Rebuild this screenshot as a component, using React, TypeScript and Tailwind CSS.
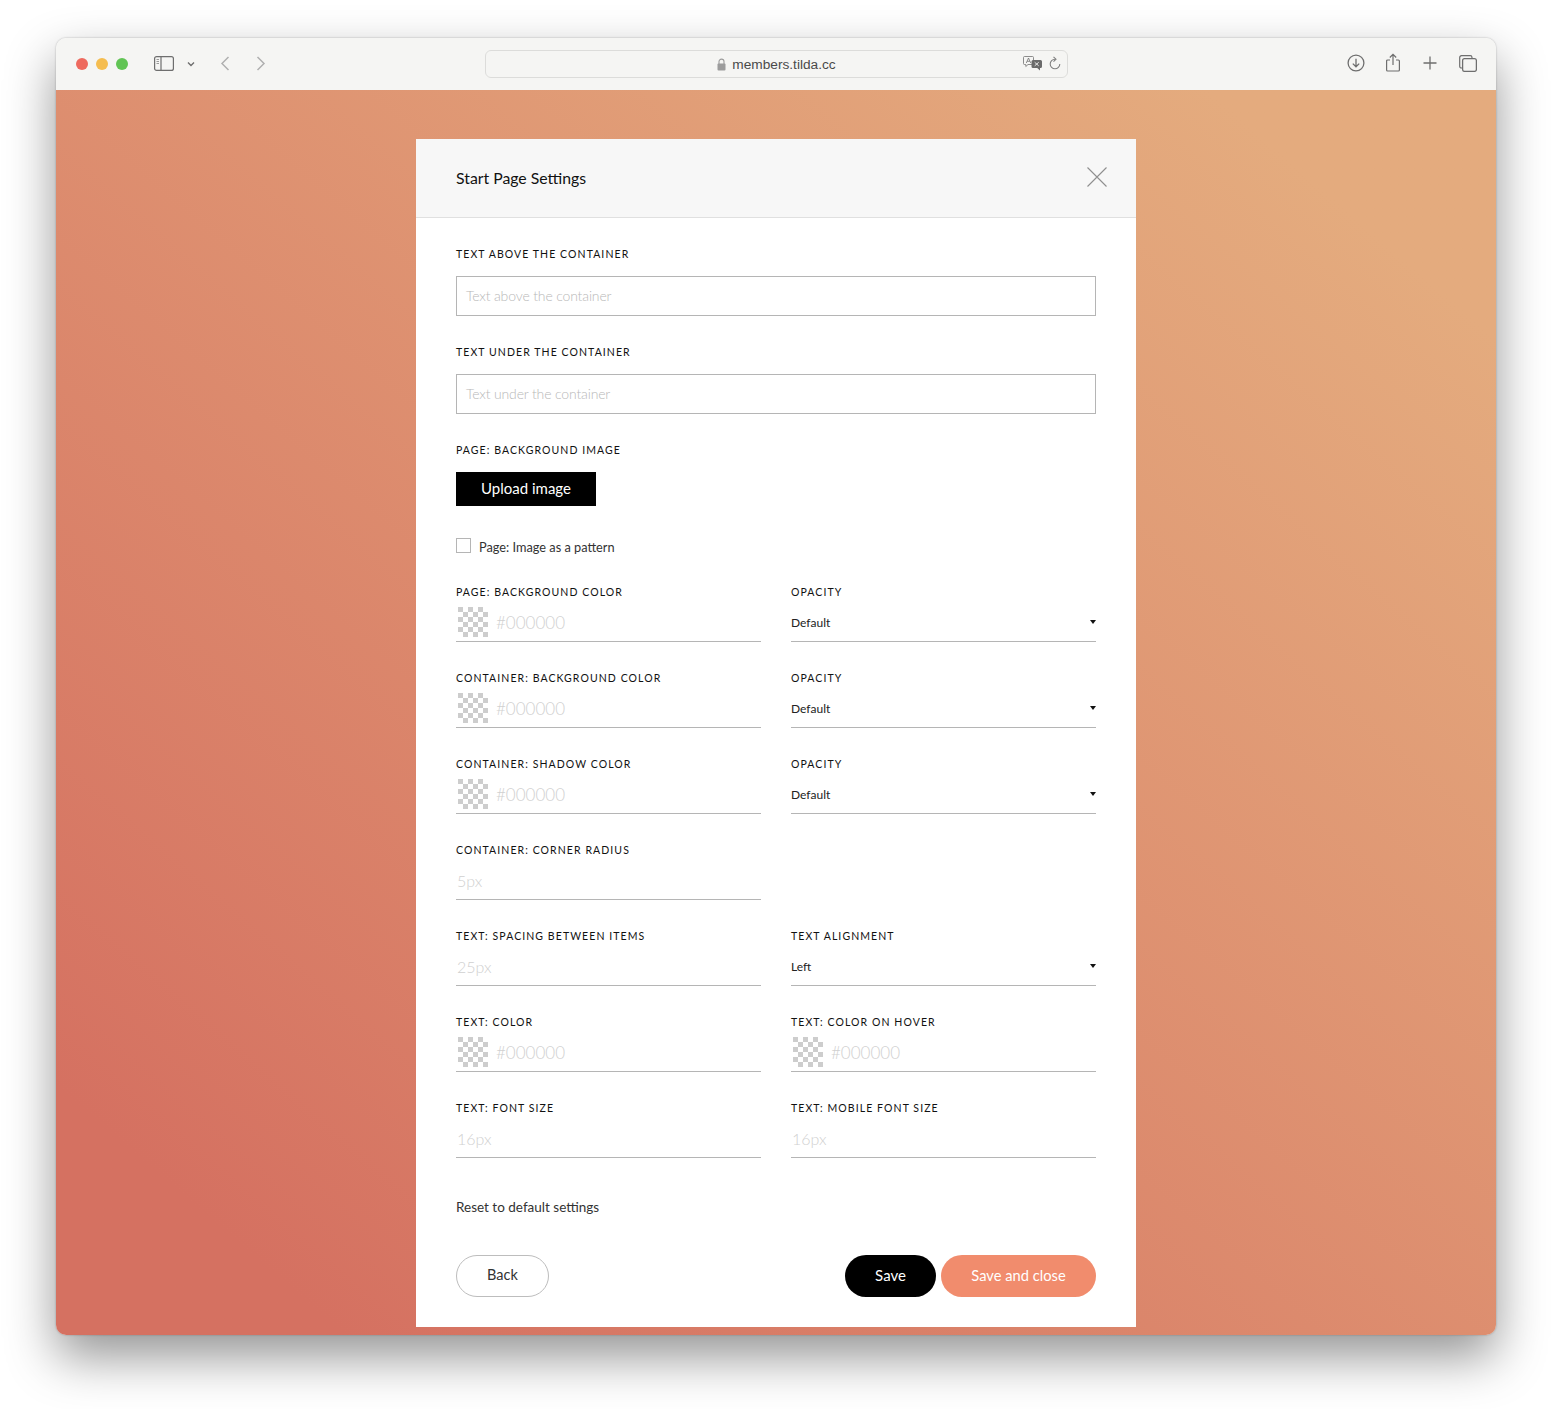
import { ReactNode } from "react";

const font = "font-['Lato','Liberation_Sans',sans-serif]";

function Label({ children }: { children: ReactNode }) {
  return (
    <div className="h-4 text-[10.5px] leading-4 tracking-[1.08px] uppercase text-[#111] whitespace-nowrap">
      {children}
    </div>
  );
}

function Swatch() {
  return (
    <svg width="30" height="30" viewBox="0 0 30 30" className="shrink-0">
      <defs>
        <pattern id="chk" width="10" height="10" patternUnits="userSpaceOnUse">
          <rect width="10" height="10" fill="#ffffff" />
          <rect width="5" height="5" fill="#cdcdcd" />
          <rect x="5" y="5" width="5" height="5" fill="#cdcdcd" />
        </pattern>
      </defs>
      <rect width="30" height="30" fill="url(#chk)" />
    </svg>
  );
}

function ColorField({ label }: { label: string }) {
  return (
    <div>
      <Label>{label}</Label>
      <div className="h-[42px] border-b border-[#b5b5b5] flex items-start pt-[7px] pl-[2px]">
        <Swatch />
        <span className="ml-[8px] mt-[4px] text-[17px] leading-[24px] font-light text-[#d0d0d0]">#000000</span>
      </div>
    </div>
  );
}

function TextField({ label, value }: { label: string; value: string }) {
  return (
    <div>
      <Label>{label}</Label>
      <div className="h-[42px] border-b border-[#b5b5b5] pt-[11px] pl-[1px] text-[16px] leading-[24px] font-light text-[#d0d0d0]">
        {value}
      </div>
    </div>
  );
}

function SelectField({ label, value }: { label: string; value: string }) {
  return (
    <div>
      <Label>{label}</Label>
      <div className="h-[42px] border-b border-[#b5b5b5] flex items-center justify-between text-[12px] text-[#222]">
        <span className="mt-[4px]">{value}</span>
        <svg width="6" height="4" viewBox="0 0 6 4" className="mt-[3px]">
          <path d="M0 0h6L3 4z" fill="#111" />
        </svg>
      </div>
    </div>
  );
}

function BoxInput({ label, placeholder }: { label: string; placeholder: string }) {
  return (
    <div>
      <Label>{label}</Label>
      <div className="mt-[14px] h-10 border border-[#b5b5b5] px-[9px] pb-[2px] flex items-center text-[14px] tracking-[-0.15px] font-light text-[#b8b8b8]">
        {placeholder}
      </div>
    </div>
  );
}

function Toolbar() {
  const ic = "#6e6e6e";
  return (
    <div className="h-[52px] bg-[#f5f5f3] flex items-center relative">
      <div className="flex items-center gap-2 ml-[20px] mb-[1px]">
        <span className="w-3 h-3 rounded-full bg-[#ee6a5e]" />
        <span className="w-3 h-3 rounded-full bg-[#f5bd4f]" />
        <span className="w-3 h-3 rounded-full bg-[#61c454]" />
      </div>
      <div className="flex items-center mb-[2px]">
        <svg width="20" height="15" viewBox="0 0 20 15" fill="none" className="ml-[26px]">
          <rect x="0.6" y="0.6" width="18.8" height="13.8" rx="2" stroke={ic} strokeWidth="1.2" />
          <path d="M7 1v13" stroke={ic} strokeWidth="1.2" />
          <path d="M2.5 3.5h2.5M2.5 5.5h2.5M2.5 7.5h2.5" stroke="#9a9a9a" strokeWidth="1.1" />
        </svg>
        <svg width="8" height="6" viewBox="0 0 8 6" fill="none" className="ml-[13px] mt-[1px]">
          <path d="M1 1.5l3 3 3-3" stroke={ic} strokeWidth="1.4" />
        </svg>
        <svg width="10" height="15" viewBox="0 0 10 15" fill="none" className="ml-[25px]">
          <path d="M8.5 1L2 7.5 8.5 14" stroke="#b0b0b0" strokeWidth="1.5" />
        </svg>
        <svg width="10" height="15" viewBox="0 0 10 15" fill="none" className="ml-[26px]">
          <path d="M1.5 1L8 7.5 1.5 14" stroke="#b0b0b0" strokeWidth="1.5" />
        </svg>
      </div>

      <div className="ml-[219px] w-[583px] h-[28px] rounded-[6px] border border-[#dcdcda] flex items-center relative">
        <div className="flex-1 flex items-center justify-center mt-[2px] font-['Liberation_Sans',sans-serif] text-[13.7px] text-[#4a4a4a]">
          <svg width="9" height="13" viewBox="0 0 9 13" className="mr-[6px]" fill="none">
            <path d="M2 6V3.6a2.5 2.5 0 0 1 5 0V6" stroke="#9c9c9c" strokeWidth="1.1" />
            <rect x="0.5" y="5.5" width="8" height="7" rx="1" fill="#9c9c9c" />
          </svg>
          members.tilda.cc
        </div>
        <svg width="20" height="15" viewBox="0 0 20 15" fill="none" className="absolute left-[537px] top-[5px]">
          <path d="M1.5 0.5h8a1 1 0 0 1 1 1v6a1 1 0 0 1-1 1H5L2.800 10.500V8.500H1.500a1 1 0 0 1-1-1v-6a1 1 0 0 1 1-1z" fill="#f5f5f3" stroke="#808080" strokeWidth="0.9" />
          <path d="M3.300 7l2.200-5 2.200 5M4.200 5.300h2.600" stroke="#707070" strokeWidth="0.8" />
          <path d="M10 4h7.500A1.500 1.500 0 0 1 19 5.500v5a1.500 1.500 0 0 1-1.500 1.500H17v2.500L14.200 12H10a1.500 1.500 0 0 1-1.500-1.500v-5A1.500 1.500 0 0 1 10 4z" fill="#6a6a6a" />
          <path d="M11.700 6.300l4 3.500M15.700 6.300l-4 3.500" stroke="#f5f5f3" strokeWidth="0.9" />
        </svg>
        <svg width="12" height="15" viewBox="0 0 12 15" fill="none" className="absolute left-[563px] top-[5px]">
          <path d="M6 3.200A4.800 4.800 0 1 0 10.800 8" stroke="#808080" strokeWidth="1.100" />
          <path d="M4.500 0.800L7 3.200 4.500 5.600" stroke="#808080" strokeWidth="1.100" />
        </svg>
      </div>

      <div className="ml-auto flex items-center mr-[19px] mb-[2px]">
        <svg width="18" height="18" viewBox="0 0 18 18" fill="none" className="mr-[21px]">
          <circle cx="9" cy="9" r="7.900" stroke={ic} strokeWidth="1.300" />
          <path d="M9 4.800v8M5.800 9.600L9 12.800l3.200-3.200" stroke={ic} strokeWidth="1.300" />
        </svg>
        <svg width="14" height="19" viewBox="0 0 14 19" fill="none" className="mr-[23px] mb-[2px]">
          <path d="M4 7H1.600a1 1 0 0 0-1 1v9a1 1 0 0 0 1 1h10.800a1 1 0 0 0 1-1V8a1 1 0 0 0-1-1H10" stroke={ic} strokeWidth="1.200" />
          <path d="M7 12V1.500M3.800 4.500L7 1.300l3.200 3.200" stroke={ic} strokeWidth="1.200" />
        </svg>
        <svg width="14" height="14" viewBox="0 0 14 14" fill="none" className="mr-[22px]">
          <path d="M7 0.500v13M0.500 7h13" stroke={ic} strokeWidth="1.300" />
        </svg>
        <svg width="18" height="17" viewBox="0 0 18 17" fill="none">
          <path d="M3 13H2.500A1.800 1.800 0 0 1 .700 11.200V2.500A1.800 1.800 0 0 1 2.500.700h8.700A1.800 1.800 0 0 1 13 2.500V3" stroke={ic} strokeWidth="1.200" />
          <rect x="3.600" y="3.600" width="13.800" height="12.800" rx="2" stroke={ic} strokeWidth="1.300" />
        </svg>
      </div>
    </div>
  );
}

export default function App() {
  return (
    <div className={`min-h-[1409px] bg-white pt-[38px] px-[56px] ${font}`}>
      <div className="h-[1297px] rounded-[10px] overflow-hidden shadow-[0_22px_50px_rgba(0,0,0,0.42),0_0_2px_rgba(0,0,0,0.3)] flex flex-col">
        <Toolbar />
        <div className="flex-1 bg-linear-to-tr from-[#d57161] from-[10%] to-[#e4ab7e] to-[90%] pt-[49px]">
          <div className="w-[720px] mx-auto bg-white">
            <div className="h-[79px] bg-[#f7f7f7] border-b border-[#e0e0e0] pl-[40px] pr-[29px] flex items-center justify-between">
              <div className="text-[15.8px] text-[#111]">Start Page Settings</div>
              <svg width="20" height="20" viewBox="0 0 20 20" fill="none" className="mb-[2px]">
                <path d="M0.500 0.500l19 19M19.500 0.500l-19 19" stroke="#8f8f8f" strokeWidth="1.100" />
              </svg>
            </div>

            <div className="px-[40px] pt-[28px] pb-[30px]">
              <div className="flex flex-col gap-7">
                <BoxInput label="Text above the container" placeholder="Text above the container" />
                <BoxInput label="Text under the container" placeholder="Text under the container" />
                <div>
                  <Label>Page: background image</Label>
                  <div className="mt-[14px] w-[140px] h-[34px] bg-black text-white text-[15px] pb-[2px] flex items-center justify-center">
                    Upload image
                  </div>
                </div>
              </div>

              <div className="mt-[32px] flex items-center h-[15px] text-[12.75px] text-[#333]">
                <span className="w-[15px] h-[15px] border border-[#b5b5b5]" />
                <span className="ml-[8px] mt-[4px]">Page: Image as a pattern</span>
              </div>

              <div className="mt-[31px] grid grid-cols-2 gap-x-[30px] gap-y-7">
                <ColorField label="Page: background color" />
                <SelectField label="Opacity" value="Default" />
                <ColorField label="Container: background color" />
                <SelectField label="Opacity" value="Default" />
                <ColorField label="Container: shadow color" />
                <SelectField label="Opacity" value="Default" />
                <TextField label="Container: corner radius" value="5px" />
                <div />
                <TextField label="Text: spacing between items" value="25px" />
                <SelectField label="Text alignment" value="Left" />
                <ColorField label="Text: color" />
                <ColorField label="Text: color on hover" />
                <TextField label="Text: font size" value="16px" />
                <TextField label="Text: mobile font size" value="16px" />
              </div>

              <div className="mt-[39px] text-[13.5px] leading-5 text-[#333]">Reset to default settings</div>

              <div className="mt-[38px] flex items-center">
                <div className="w-[93px] h-[42px] rounded-[21px] border border-[#bdbdbd] pb-[2px] flex items-center justify-center text-[14.5px] text-[#333]">
                  Back
                </div>
                <div className="ml-auto w-[91px] h-[42px] rounded-[21px] bg-black text-white text-[15px] pb-[1px] flex items-center justify-center">
                  Save
                </div>
                <div className="ml-[5px] w-[155px] h-[42px] rounded-[21px] bg-[#f18c6d] text-white text-[14.7px] pb-[1px] flex items-center justify-center">
                  Save and close
                </div>
              </div>
            </div>
          </div>
        </div>
      </div>
    </div>
  );
}
